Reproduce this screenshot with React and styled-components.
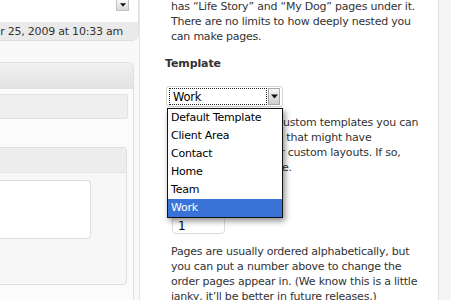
import React from 'react'
import styled, { createGlobalStyle } from 'styled-components'

const GlobalStyle = createGlobalStyle`
    html, body {
        margin: 0;
        padding: 0;
        background: #f9f9f9;
    }
    body {
        font-family: "DejaVu Sans", Verdana, sans-serif;
        overflow: hidden;
    }
`

const templates = ['Default Template', 'Client Area', 'Contact', 'Home', 'Team', 'Work']

const DownArrow = ({ size = 7 }) => (
    <svg width={size} height={Math.ceil(size * 0.6)} viewBox="0 0 10 6">
        <polygon points="0,0 10,0 5,6" fill="#111" />
    </svg>
)

const App = () => {
    return (
        <>
            <GlobalStyle />
            <Page>
                <MainColumn>
                    <EditorBox>
                        <EditorArea>
                            <ScrollArrow>
                                <DownArrow size={6} />
                            </ScrollArrow>
                        </EditorArea>
                        <StatusBar>
                            Last edited by admin on November 25, 2009 at 10:33 am
                        </StatusBar>
                    </EditorBox>

                    <PostBox>
                        <PostBoxHeader />
                        <PostBoxInside>
                            <FieldStrip />
                            <FieldTable>
                                <FieldTableHead />
                                <FieldTableBody>
                                    <ValueArea />
                                </FieldTableBody>
                            </FieldTable>
                        </PostBoxInside>
                    </PostBox>
                </MainColumn>

                <SidePanel>
                    <HelpText $top={-31}>
                        You can arrange your pages in hierarchies, for
                        <br />
                        example, you could have an “About” page that
                        <br />
                        has “Life Story” and “My Dog” pages under it.
                        <br />
                        There are no limits to how deeply nested you
                        <br />
                        can make pages.
                    </HelpText>

                    <FieldLabel $top={12}>Template</FieldLabel>
                    <SelectWrap>
                        <SelectField>
                            <SelectValue>Work</SelectValue>
                            <SelectButton>
                                <DownArrow size={7} />
                            </SelectButton>
                        </SelectField>
                        <SelectMenu>
                            {templates.map((name) => (
                                <MenuItem key={name} $selected={name === 'Work'}>
                                    {name}
                                </MenuItem>
                            ))}
                        </SelectMenu>
                    </SelectWrap>

                    <HelpText $top={8}>
                        Some themes have custom templates you can
                        <br />
                        use for certain pages that might have
                        <br />
                        additional features or custom layouts. If so,
                        <br />
                        you’ll see them above.
                    </HelpText>

                    <FieldLabel $top={14} $indent={4}>Order</FieldLabel>
                    <OrderInput>1</OrderInput>

                    <HelpText $top={10}>
                        Pages are usually ordered alphabetically, but
                        <br />
                        you can put a number above to change the
                        <br />
                        order pages appear in. (We know this is a little
                        <br />
                        janky, it’ll be better in future releases.)
                    </HelpText>
                </SidePanel>
                <Gutter />
            </Page>
        </>
    )
}

export default App

const Page = styled.div`
    display: flex;
    width: 451px;
    height: 300px;
    overflow: hidden;
    background: #f9f9f9;
    color: #333333;
    font-size: 11px;
    letter-spacing: -0.22px;
`

const MainColumn = styled.div`
    width: 139px;
    flex-shrink: 0;
    display: flex;
    flex-direction: column;
`

const EditorBox = styled.div`
    border-right: 1px solid #dfdfdf;
    border-bottom: 1px solid #dfdfdf;
    border-bottom-right-radius: 7px;
    overflow: hidden;
`

const EditorArea = styled.div`
    height: 22px;
    background: #ffffff;
    display: flex;
    justify-content: flex-end;
    align-items: flex-start;
    padding-right: 9px;
`

const ScrollArrow = styled.div`
    width: 11px;
    height: 10px;
    border: 1px solid #c2c2c2;
    border-top: none;
    background: linear-gradient(#fafafa, #d9d9d9);
    display: flex;
    align-items: center;
    justify-content: center;
`

const StatusBar = styled.div`
    height: 18px;
    background: #eaeaea;
    display: flex;
    align-items: center;
    justify-content: flex-end;
    padding-right: 15px;
    white-space: nowrap;
    overflow: hidden;
    color: #333333;
`

const PostBox = styled.div`
    flex: 1;
    margin-top: 21px;
    margin-right: 5px;
    border-top: 1px solid #dfdfdf;
    border-right: 1px solid #dfdfdf;
    border-top-right-radius: 6px;
    background: #fbfbfb;
    overflow: hidden;
`

const PostBoxHeader = styled.div`
    height: 25px;
    background: linear-gradient(#f1f1f1, #e2e2e2);
    border-bottom: 1px solid #e2e2e2;
`

const PostBoxInside = styled.div`
    padding: 5px 5px 0 0;
    display: flex;
    flex-direction: column;
`

const FieldStrip = styled.div`
    height: 23px;
    background: #efefef;
    border: 1px solid #e0e0e0;
    border-left: none;
    border-radius: 0 3px 3px 0;
`

const FieldTable = styled.div`
    margin-top: 28px;
    margin-right: 1px;
    height: 136px;
    border: 1px solid #dfdfdf;
    border-left: none;
    border-radius: 0 4px 4px 0;
    background: #f7f7f7;
    overflow: hidden;
`

const FieldTableHead = styled.div`
    height: 24px;
    background: #ededed;
    border-bottom: 1px solid #e3e3e3;
`

const FieldTableBody = styled.div`
    padding-top: 7px;
`

const ValueArea = styled.div`
    width: 90px;
    height: 57px;
    background: #ffffff;
    border: 1px solid #dcdcdc;
    border-left: none;
    border-radius: 0 4px 4px 0;
`

const SidePanel = styled.div`
    width: 300px;
    flex-shrink: 0;
    box-sizing: border-box;
    background: #ffffff;
    border-left: 1px solid #e6e6e6;
    border-right: 1px solid #dfdfdf;
    padding-left: 25px;
    display: flex;
    flex-direction: column;
    align-items: flex-start;
`

const Gutter = styled.div`
    flex: 1;
    background: #f5f5f5;
`

const HelpText = styled.p`
    margin: ${(p) => p.$top}px 0 0 6px;
    line-height: 15px;
    white-space: nowrap;
    color: #333333;
`

const FieldLabel = styled.div`
    margin-top: ${(p) => p.$top}px;
    margin-left: ${(p) => p.$indent || 0}px;
    line-height: 15px;
    font-weight: bold;
    font-size: 11px;
    letter-spacing: -0.1px;
    color: #333333;
`

const SelectWrap = styled.div`
    position: relative;
    margin-top: 15px;
    margin-left: 1px;
`

const SelectField = styled.div`
    width: 117px;
    height: 21px;
    box-sizing: border-box;
    border: 1px solid #d4d4d4;
    border-radius: 3px;
    padding: 1px 2px 1px 2px;
    display: flex;
    background: #ffffff;
`

const SelectValue = styled.div`
    flex: 1;
    border: 1px dotted #222222;
    display: flex;
    align-items: center;
    padding-left: 3px;
    color: #000000;
    font-size: 11.5px;
`

const SelectButton = styled.div`
    width: 12px;
    margin-left: 1px;
    background: linear-gradient(#f6f6f6, #cfcfcf);
    border: 1px solid #a9a9a9;
    box-sizing: border-box;
    display: flex;
    align-items: center;
    justify-content: center;
`

const SelectMenu = styled.div`
    position: absolute;
    top: 22px;
    left: 1px;
    width: 116px;
    box-sizing: border-box;
    border: 1px solid #111111;
    background: #ffffff;
    box-shadow: 2px 3px 6px rgba(0, 0, 0, 0.45);
    z-index: 2;
`

const MenuItem = styled.div`
    height: 18px;
    line-height: 18px;
    padding-left: 3px;
    font-size: 11px;
    color: ${(p) => (p.$selected ? '#ffffff' : '#000000')};
    background: ${(p) => (p.$selected ? '#3a73d8' : 'transparent')};
`

const OrderInput = styled.div`
    margin: 12px 0 0 7px;
    width: 53px;
    height: 25px;
    box-sizing: border-box;
    border: 1px solid #dcdcdc;
    border-radius: 4px;
    padding: 2px 0 0 5px;
    display: flex;
    align-items: center;
    font-size: 12px;
    color: #000000;
`
